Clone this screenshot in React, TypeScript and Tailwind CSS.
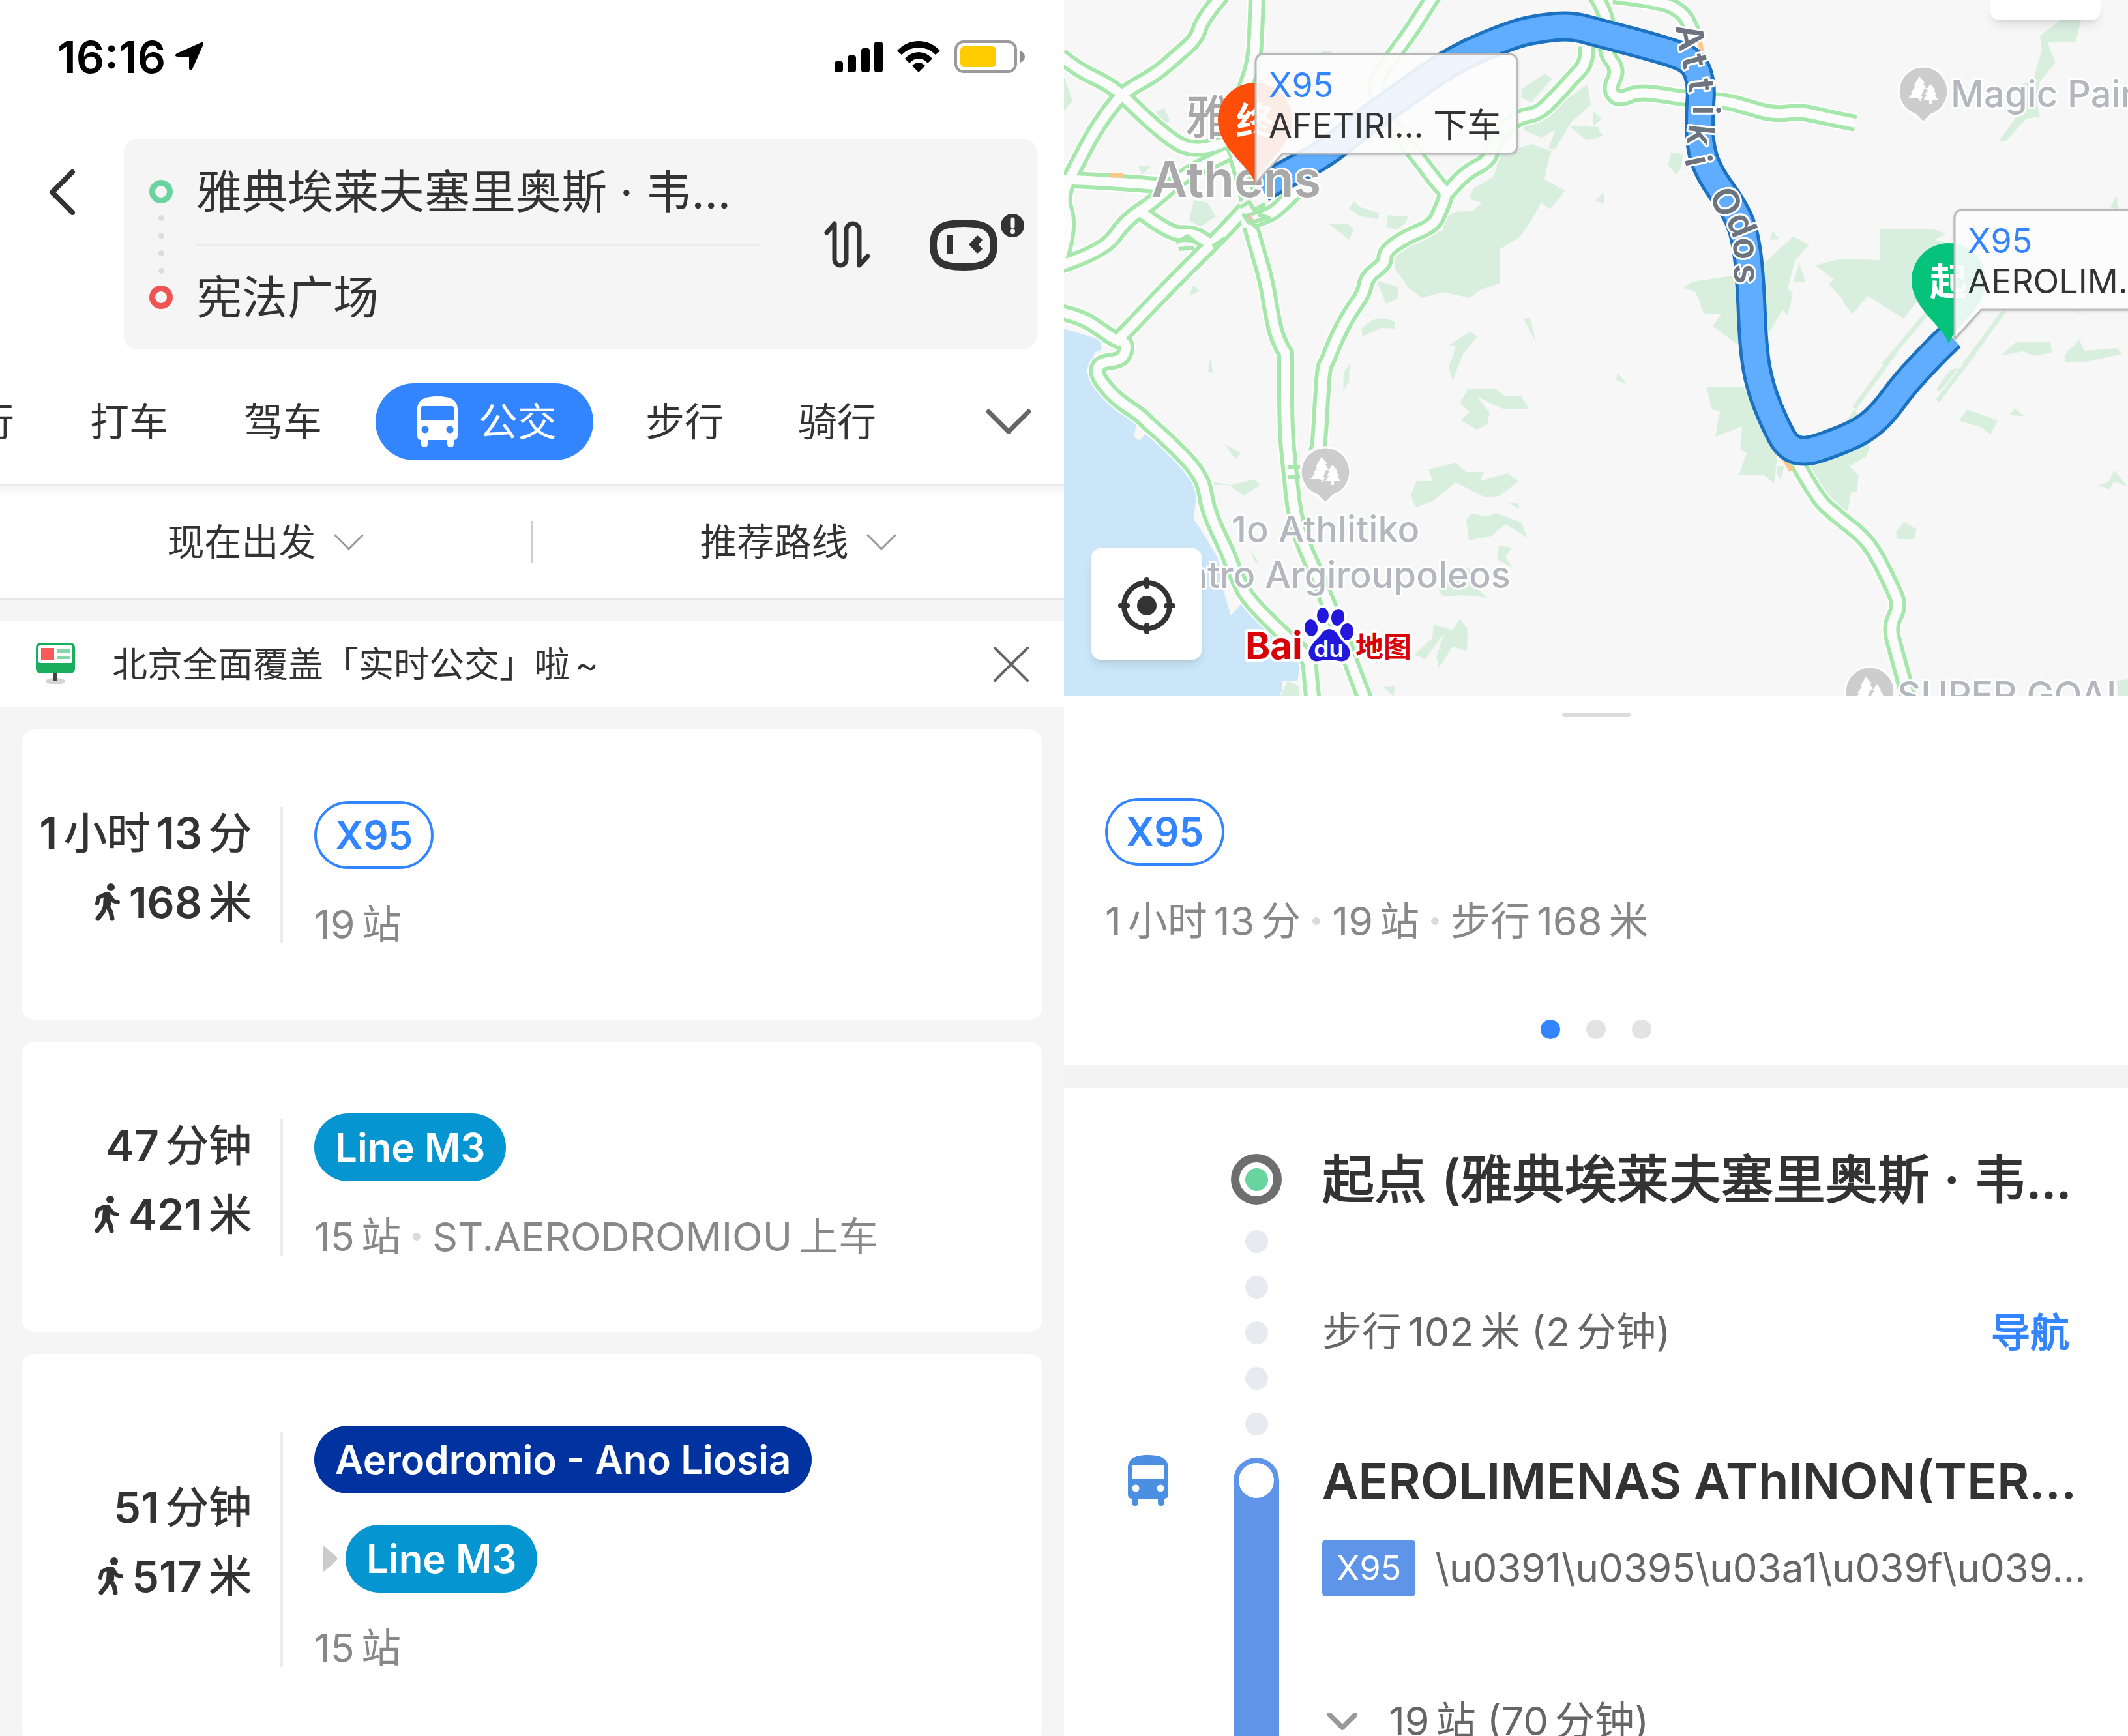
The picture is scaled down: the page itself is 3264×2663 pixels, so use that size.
import React from "react";

type Pt = [number, number];

/* ---------- Geometry helpers for the map ---------- */

const TILE = {
  nw: [0, 0],
  ne: [812, 0],
  sw: [0, 540],
  se: [812, 540],
} as const;

type TileName = keyof typeof TILE;

// Tile units are 1568 x 1568 for an 820 x 560 piece of the map.
function project(tile: TileName, list: string): Pt[] {
  const [ox, oy] = TILE[tile];
  return list
    .trim()
    .split(/\s+/)
    .map((p) => {
      const [x, y] = p.split(",").map(Number);
      return [Math.round(ox + x / 1.912), Math.round(oy + y / 2.8)] as Pt;
    });
}

function smooth(pts: Pt[]): string {
  let d = `M${pts[0][0]} ${pts[0][1]}`;
  for (let i = 1; i < pts.length - 1; i++) {
    const mx = (pts[i][0] + pts[i + 1][0]) / 2;
    const my = (pts[i][1] + pts[i + 1][1]) / 2;
    d += ` Q${pts[i][0]} ${pts[i][1]} ${mx} ${my}`;
  }
  const last = pts[pts.length - 1];
  return d + ` L${last[0]} ${last[1]}`;
}

const polygon = (tile: TileName, list: string) =>
  "M" + project(tile, list).map((p) => p.join(" ")).join("L") + "Z";

const ROADS: string[] = [
  smooth(project("nw", "465,-20 405,80 390,165 330,240 270,320 185,385 150,440 90,560 40,700 -10,840 18,960 -15,1150")),
  smooth(project("nw", "-10,240 40,300 130,360 180,420 240,510 330,620 380,640 440,630 500,590")),
  smooth(project("nw", "566,-20 562,200 550,300 530,380 490,600 520,740 540,860")),
  smooth(project("nw", "-10,770 150,780 290,798")),
  smooth(project("nw", "-10,1140 118,1078 180,945 260,870 350,750 480,660")),
  smooth(project("nw", "225,910 312,1008 380,1000 430,1050")),
  smooth(project("nw", "165,1450 300,1240 440,1040 530,900")),
  smooth(project("nw", "520,960 600,930 640,880 690,810")),
  smooth([
    ...project("nw", "-10,1340 50,1360 110,1420 155,1465 182,1470"),
    ...project("sw", "182,0 165,35 105,45 92,95 150,200 220,265 250,310 290,360 340,430 385,500 412,570 418,650 440,740 480,860 510,980 540,1060 640,1210 718,1310 722,1400 730,1500"),
  ]),
  smooth([
    ...project("nw", "540,930 570,1090 592,1200 612,1370 625,1450 650,1520"),
    ...project("sw", "650,0 650,330 662,500 675,690 700,820 740,950 775,1080 810,1200 845,1350 885,1500"),
  ]),
  smooth([
    ...project("nw", "1085,-20 1025,120 970,230 900,370 960,540 1030,660 1095,790 1125,830 1105,900 1085,970 1000,1020 940,1080 942,1130 888,1190 880,1260 840,1340 800,1450 770,1560"),
    ...project("sw", "762,60 758,150 748,400 740,430"),
  ]),
  smooth([...project("ne", "-20,200 -18,270"), ...project("nw", "1490,340 1440,420 1390,490 1330,500 1260,600 1250,690 1180,740 1125,830")]),
  smooth(project("ne", "5,-20 50,80 30,220 75,300 45,380 70,430 130,395 200,405 280,425 390,435 450,460 530,492 610,480 680,505 768,530")),
  smooth(project("ne", "60,-20 200,5 260,50 285,110 300,180")),
  smooth(project("se", "585,440 650,620 710,700 790,790 830,870 870,990 900,1090 868,1180 890,1290 925,1490")),
];

const ROUTE = smooth([
  [303, 288], [350, 262], [400, 236], [445, 200], [523, 143], [601, 89], [690, 52], [732, 43], [777, 39],
  [812, 48], [940, 82], [968, 98], [978, 132], [975, 171], [975, 221], [988, 264], [1029, 321], [1045, 361], [1053, 429],
  [1057, 536], [1068, 596], [1092, 654], [1110, 686], [1136, 694], [1175, 682], [1225, 661], [1257, 633], [1288, 590], [1335, 540], [1360, 516],
]);

const SEA = [
  polygon("nw", "-5,1410 30,1425 105,1460 110,1500 80,1520 90,1568 -5,1568"),
  polygon("sw", "-5,0 90,0 70,110 130,220 215,300 205,360 220,380 240,350 350,490 390,570 380,720 400,760 450,880 470,1040 490,1130 520,1080 560,1150 620,1210 695,1340 685,1410 638,1410 640,1450 630,1480 -5,1490"),
].join("");

const PARKS = [
  polygon("nw", "1370,620 1430,650 1420,690 1410,770 1470,820 1425,900 1400,870 1365,960 1335,1020 1280,1070 1280,1215 1220,1245 1190,1280 1110,1255 1050,1280 1010,1235 970,1150 965,1090 1010,1040 1060,1000 1110,990 1110,940 1150,910 1200,905 1225,870 1190,855 1200,810 1260,760 1280,660"),
  polygon("nw", "1345,380 1410,315 1430,340 1370,440 1340,420"),
  polygon("nw", "1470,430 1535,360 1545,450 1490,520 1440,640 1420,640 1440,560 1400,590 1350,560 1345,520 1420,470"),
  polygon("nw", "1480,540 1568,545 1568,590 1530,600"),
  polygon("nw", "850,865 870,890 925,915 920,940 870,930 835,895"),
  polygon("nw", "775,960 830,960 850,985 835,1030"),
  polygon("nw", "950,925 1010,930 1000,960 975,985 945,975"),
  polygon("nw", "380,860 420,870 445,930 400,975 367,945"),
  polygon("nw", "270,480 295,465 312,520 290,530"),
  polygon("nw", "0,330 25,430 0,480"),
  polygon("nw", "218,715 255,715 230,750"),
  polygon("nw", "915,1205 980,1235 980,1280 945,1305 930,1250"),
  polygon("nw", "872,1410 905,1375 935,1365 970,1380 970,1410 930,1408 875,1445"),
  polygon("nw", "1130,1480 1190,1425 1213,1445 1170,1520 1140,1635 1128,1580 1150,1490"),
  polygon("nw", "1348,1370 1368,1365 1385,1470"),
  polygon("nw", "378,1225 398,1250 368,1270"),
  polygon("nw", "755,220 785,220 775,240 755,240"),
  polygon("ne", "1370,85 1430,85 1415,180 1330,180 1355,270 1310,350 1300,440 1310,500 1270,510 1210,605 1188,608 1240,500 1270,470 1250,370 1290,340 1315,215 1310,155"),
  polygon("ne", "0,480 25,510 0,540 28,580 0,600"),
  polygon("ne", "225,655 262,660 258,720 245,750 220,710"),
  polygon("ne", "30,830 30,875 3,860"),
  polygon("ne", "525,990 545,1028 518,1030"),
  polygon("ne", "585,1015 632,1050 590,1120 570,1240 585,1260 570,1355 555,1330 520,1420 420,1478 350,1400 375,1350 325,1350 300,1255 262,1235 290,1210 410,1185 480,1160"),
  polygon("ne", "605,1130 622,1210 587,1210"),
  polygon("ne", "840,983 995,983 1035,1005 1000,1030 1100,1060 1100,1250 950,1290 910,1370 805,1270 760,1350 730,1290 775,1230 735,1290 690,1220 705,1200 650,1140 725,1112 840,1118"),
  polygon("ne", "1370,1300 1450,1365 1400,1330"),
  polygon("ne", "1535,840 1538,895 1515,890"),
  polygon("ne", "1200,1520 1240,1468 1340,1468 1345,1515 1290,1530 1260,1510 1200,1525"),
  polygon("ne", "1425,1460 1440,1505 1535,1495 1550,1520 1435,1558 1385,1555 1385,1520"),
  polygon("se", "333,148 440,150 530,330 540,450 530,565 500,528 427,528 450,435 430,420 435,320 358,365 370,255 347,245"),
  polygon("se", "765,245 790,290 810,410 800,450 752,490 778,530 772,600 757,600 745,680 730,690 690,620 620,480 740,300"),
  polygon("se", "1095,245 1185,295 1165,355 1140,325 1072,293"),
  polygon("se", "1235,240 1262,275 1220,272"),
  polygon("se", "1528,508 1568,580 1525,555 1515,590 1480,570 1510,560"),
  polygon("se", "912,730 948,762 940,803 893,803 888,770"),
  polygon("se", "70,90 100,140 66,120"),
  polygon("se", "1045,75 1070,70 1015,170 1005,160"),
  polygon("se", "540,490 560,490 548,548 538,520"),
  polygon("se", "1535,1410 1568,1405 1568,1480 1540,1480"),
  polygon("sw", "430,20 436,90 422,85"),
  polygon("sw", "838,50 835,130 818,165 820,90"),
  polygon("sw", "1185,158 1265,160 1295,190 1340,190 1368,245 1290,245 1210,190 1248,260 1240,310 1210,333 1165,290 1190,255 1160,220"),
  polygon("sw", "1150,475 1180,515 1232,515 1220,555 1300,520 1335,555 1275,620 1235,625 1150,560 1080,640 1030,665 1018,615 1035,553 1080,553 1068,505"),
  polygon("sw", "1305,650 1332,650 1335,675"),
  polygon("sw", "1195,693 1240,705 1265,692 1340,730 1360,797 1295,740 1255,790 1187,808 1180,720"),
  polygon("sw", "1275,832 1313,840 1295,880 1318,930 1270,890"),
  polygon("sw", "1190,925 1200,1000 1240,1055 1170,1045 1110,1050 1095,1010"),
  polygon("sw", "1160,1145 1183,1190 1182,1285 1140,1265 1100,1355 1092,1310 1115,1210 1060,1320 1027,1300 1080,1230 1085,1170 1140,1195"),
  polygon("sw", "470,395 518,435 503,462"),
  polygon("sw", "440,560 490,570 560,545 573,575 525,615 485,572 440,572"),
  polygon("sw", "540,830 570,905 562,905"),
  polygon("sw", "655,1415 690,1435 690,1480 632,1480"),
  polygon("sw", "935,1440 970,1436 968,1478"),
].join("");

const RUNWAYS = [
  smooth(project("ne", "975,1350 850,1568")),
  smooth(project("ne", "1205,1335 1088,1568")),
  smooth(project("se", "885,0 765,240")),
  smooth(project("se", "1118,0 1010,210")),
].join("");

const ROAD_LETTERS: [string, number, number, number][] = [
  ["A", 959, 57, 80],
  ["t", 966, 94, 76],
  ["t", 976, 131, 84],
  ["i", 983, 169, 90],
  ["k", 975, 207, 96],
  ["i", 971, 247, 78],
  ["O", 1014, 310, 66],
  ["d", 1038, 345, 68],
  ["o", 1045, 381, 84],
  ["s", 1046, 420, 88],
];

/* ---------- Icons ---------- */

function BusIcon({ className }: { className?: string }) {
  return (
    <svg viewBox="0 0 62 78" className={className} fill="currentColor" aria-hidden="true">
      <path
        fillRule="evenodd"
        d="M0 20C0 6 10 0 31 0s31 6 31 20v40q0 7-6 7v6q0 5-5 5t-5-5v-6H16v6q0 5-5 5t-5-5v-6q-6 0-6-7zM6 18q0-3 3-3h44q3 0 3 3v18H6zM12 45.500a5.500 5.500 0 1 0 .01 0zM50 45.500a5.500 5.500 0 1 0 .01 0z"
      />
    </svg>
  );
}

function WalkIcon() {
  return (
    <svg viewBox="0 0 38 58" className="h-[58px] w-[38px] shrink-0" fill="none" stroke="currentColor" strokeLinecap="round" strokeLinejoin="round" aria-hidden="true">
      <circle cx="24" cy="6" r="6" fill="currentColor" stroke="none" />
      <path d="M19 20L18 33" strokeWidth="12" />
      <path d="M3 31L5 22L15 17H21L28 27L35 29" strokeWidth="6" />
      <path d="M16 34L12 44L4 54M18 34L24 44L26 54" strokeWidth="7" />
    </svg>
  );
}

function Chevron({ className, width }: { className: string; width: number }) {
  return (
    <svg viewBox="0 0 48 28" className={className} fill="none" stroke="currentColor" strokeWidth={width} strokeLinecap="round" strokeLinejoin="round" aria-hidden="true">
      <path d="M3 3L24 24L45 3" />
    </svg>
  );
}

function StatusIcons() {
  return (
    <div className="flex items-center">
      <svg viewBox="0 0 74 48" className="h-12 w-[74px]" aria-label="信号">
        <rect x="0" y="31" width="13" height="17" rx="4" />
        <rect x="20" y="22" width="13" height="26" rx="4" />
        <rect x="41" y="11" width="13" height="37" rx="4" />
        <rect x="61" y="1" width="13" height="47" rx="4" />
      </svg>
      <svg viewBox="0 0 66 48" className="ml-[22px] h-12 w-[66px]" aria-label="无线网络">
        <path d="M0 15Q14 0 33 0T66 15L59 21Q48 10 33 10T7 21Z" />
        <path d="M12 27Q21 17 33 17T54 27L47 34Q41 27 33 27T19 34Z" />
        <path d="M23 38Q28 33 33 33T43 38L33 48Z" />
      </svg>
      <svg viewBox="0 0 108 50" className="ml-[22px] h-[50px] w-[108px]" aria-label="电池">
        <rect x="2" y="2" width="92" height="46" rx="12" fill="none" stroke="#9b9b9d" strokeWidth="4" />
        <rect x="9" y="9" width="55" height="32" rx="6" fill="#ffcc00" />
        <path d="M101 16q7 3 7 9t-7 9z" fill="#8e8e90" />
      </svg>
    </div>
  );
}

function TreePin({ x, y }: { x: number; y: number }) {
  return (
    <g transform={`translate(${x} ${y})`}>
      <path d="M0 -38a38 38 0 0 1 12 74L0 48L-12 36A38 38 0 0 1 0 -38z" fill="#cdcdcd" stroke="#fff" strokeWidth="3" strokeLinejoin="round" />
      <path d="M-6 -23L3 -12H0L5 -3H1L-3 7L0 11H-4V16L-8 11H-23L-16 2H-19L-12 -8H-15z" fill="#fff" />
      <path d="M11 -11L18 -2H16L21 6H18L23 14H13V20H9V14H0L5 6H2L7 -2H4z" fill="#fff" />
    </g>
  );
}

/* ---------- Text with mixed digits and Chinese ---------- */

function Mixed({ parts }: { parts: string[] }) {
  return (
    <>
      {parts.map((part, i) => (
        <span key={i}>{part}</span>
      ))}
    </>
  );
}

function StrongMixed({ parts }: { parts: string[] }) {
  return (
    <>
      {parts.map((part, i) => (
        <span key={i} className={/\d/.test(part) ? "font-semibold" : "font-normal [-webkit-text-stroke:1px]"}>
          {part}
        </span>
      ))}
    </>
  );
}

function Dot() {
  return (
    <span className="mx-2 flex">
      <span className="size-3 rounded-full bg-[#dadada]" />
    </span>
  );
}

const infoLine = "mt-[43px] flex items-center gap-[10px] whitespace-nowrap text-[61px] leading-[84px] text-[#888]";
const pill = "flex h-[104px] items-center whitespace-nowrap rounded-full text-[60px] font-semibold";

function RoutePill({ children }: { children: React.ReactNode }) {
  return <span className={`${pill} w-fit border-4 border-[#3385ff] bg-white px-7 text-[#3385ff]`}>{children}</span>;
}

/* ---------- Route planner ---------- */

function SearchHeader() {
  return (
    <div className="mt-[39px] flex items-start pr-[42px]">
      <button type="button" aria-label="返回" className="flex h-[164px] w-[190px] shrink-0 items-center pl-[74px] text-[#333]">
        <svg viewBox="0 0 42 70" className="h-[70px] w-[42px]" fill="none" stroke="currentColor" strokeWidth="8" strokeLinecap="round" strokeLinejoin="round">
          <path d="M37 4L6 35L37 66" />
        </svg>
      </button>
      <div className="flex min-w-0 flex-1 items-start rounded-[20px] bg-[#f5f5f5] pl-[39px]">
        <div className="flex shrink-0 flex-col items-center gap-[18px] pt-[63px]">
          <span className="size-9 rounded-full border-[9px] border-[#6ad4a0]" />
          <span className="size-[9px] rounded-full bg-[#dcdcdc]" />
          <span className="size-[9px] rounded-full bg-[#dcdcdc]" />
          <span className="size-[9px] rounded-full bg-[#dcdcdc]" />
          <span className="size-[9px] rounded-full bg-[#dcdcdc]" />
          <span className="size-9 rounded-full border-[9px] border-[#f05353]" />
        </div>
        <div className="ml-9 min-w-0 flex-1 text-[70px] text-[#333]">
          <button type="button" className="block h-[162px] w-full whitespace-nowrap text-left">雅典埃莱夫塞里奥斯 · 韦…</button>
          <hr className="h-[2px] border-0 bg-[#ededed]" />
          <button type="button" className="block h-[159px] w-full whitespace-nowrap text-left">宪法广场</button>
        </div>
        <button type="button" aria-label="交换起终点" className="ml-[98px] mt-[126px] shrink-0">
          <svg viewBox="0 0 72 72" className="size-[72px]" fill="none" stroke="#333" strokeWidth="7" strokeLinecap="round" strokeLinejoin="round">
            <path d="M4 18L16 4V59a9 9 0 0 0 18 0V14a10 10 0 0 1 20 0V68L67 54" />
          </svg>
        </button>
        <button type="button" aria-label="语音助手" className="ml-[88px] mr-[18px] mt-[114px] shrink-0">
          <svg viewBox="0 0 148 90" className="h-[90px] w-[148px]">
            <path d="M54 15.500C89 15.500 100.500 24 100.500 49S89 82.500 54 82.500S7.500 74 7.500 49S19 15.500 54 15.500Z" fill="none" stroke="#333" strokeWidth="11" />
            <rect x="28" y="34" width="10" height="28" fill="#333" />
            <path d="M62 48L75 34L83 41L77 48L83 55L75 62Z" fill="#333" />
            <circle cx="129" cy="19" r="18" fill="#333" />
            <path d="M129 10V20" stroke="#f5f5f5" strokeWidth="7" strokeLinecap="round" />
            <circle cx="129" cy="28" r="4" fill="#f5f5f5" />
          </svg>
        </button>
      </div>
    </div>
  );
}

function Tabs() {
  return (
    <div className="mt-[52px] flex items-center pb-[37px] text-[60px] leading-[118px] text-[#333]">
      <nav className="flex min-w-0 flex-1 gap-12 overflow-hidden whitespace-nowrap">
        <button type="button" className="-ml-[72px] px-[34px]">行</button>
        <button type="button" className="px-[34px]">打车</button>
        <button type="button" className="px-[34px]">驾车</button>
        <button type="button" aria-current="page" className="flex shrink-0 items-center rounded-full bg-[#3385ff] pl-16 pr-14 text-white">
          <BusIcon className="mr-8 h-[78px] w-[62px]" />
          公交
        </button>
        <button type="button" className="pl-8 pr-[34px]">步行</button>
        <button type="button" className="pl-8 pr-[34px]">骑行</button>
      </nav>
      <button type="button" aria-label="更多" className="mr-[50px] shrink-0 text-[#666]">
        <Chevron className="h-[41px] w-[70px]" width={5} />
      </button>
    </div>
  );
}

function Filters() {
  const item = "flex flex-1 items-center justify-center gap-[26px]";
  return (
    <div className="flex h-[175px] items-center border-b-2 border-[#e8e8ea] bg-gradient-to-b from-[#f3f3f3] to-white to-[9%] text-[57px] text-[#333]">
      <button type="button" className={item}>
        现在出发
        <Chevron className="h-[28px] w-[48px] text-[#999]" width={3} />
      </button>
      <span className="h-[65px] w-[2px] bg-[#ccc]" />
      <button type="button" className={item}>
        推荐路线
        <Chevron className="h-[28px] w-[48px] text-[#999]" width={3} />
      </button>
    </div>
  );
}

function Notice() {
  return (
    <div className="mt-[33px] flex h-[132px] items-center bg-white pl-[54px] pr-[53px]">
      <svg viewBox="0 0 62 66" className="h-[66px] w-[62px] shrink-0" aria-hidden="true">
        <ellipse cx="31" cy="59" rx="15" ry="5" fill="#d5d5d5" />
        <rect x="1" y="0" width="60" height="47" rx="7" fill="#18ae5e" />
        <rect x="5" y="4" width="52" height="27" rx="3" fill="#fff" />
        <rect x="9" y="8" width="20" height="18" fill="#fb5a5a" />
        <path d="M34 12.500H53M34 22.500H53" stroke="#85d5a6" strokeWidth="5" />
        <path d="M31 47V59" stroke="#444" strokeWidth="6" />
      </svg>
      <p className="ml-14 flex flex-1 gap-2 text-[54px] text-[#333]">
        <span>北京全面覆盖「实时公交」啦</span>
        <span>~</span>
      </p>
      <button type="button" aria-label="关闭" className="text-[#666]">
        <svg viewBox="0 0 56 56" className="size-14" fill="none" stroke="currentColor" strokeWidth="4" strokeLinecap="round">
          <path d="M3 3L53 53M53 3L3 53" />
        </svg>
      </button>
    </div>
  );
}

function RouteCard({ time, walk, lines, info }: { time: string[]; walk: string; lines: React.ReactNode; info: React.ReactNode }) {
  return (
    <li>
      <a href="#route" className="flex rounded-[20px] bg-white pr-8">
        <div className="flex w-[353px] shrink-0 flex-col items-end justify-center pb-[118px] pt-24 text-[66px] leading-[106px] text-[#333]">
          <span className="flex gap-[10px] whitespace-nowrap">
            <StrongMixed parts={time} />
          </span>
          <span className="flex items-center gap-[10px] whitespace-nowrap">
            <span className="mr-1">
              <WalkIcon />
            </span>
            <StrongMixed parts={[walk, "米"]} />
          </span>
        </div>
        <span className="mb-[117px] ml-11 mt-[119px] w-1 shrink-0 bg-[#ececec]" />
        <div className="ml-12 min-w-0 flex-1 pb-[104px] pt-[110px]">
          <div className="flex flex-col gap-12">{lines}</div>
          <p className={infoLine}>{info}</p>
        </div>
      </a>
    </li>
  );
}

function Planner() {
  return (
    <section className="flex min-w-0 flex-col bg-[#f5f5f5]">
      <header className="border-b-2 border-[#ebebed] bg-white">
        <div className="flex h-[174px] items-center justify-between pl-[88px] pr-[60px]">
          <div className="flex items-center text-[68px] font-semibold text-black">
            16:16
            <svg viewBox="0 0 44 44" className="ml-[14px] size-11" aria-hidden="true">
              <path d="M44 3L27 41Q23 45 22 40V22H4Q-2 21 3 17L41 0Q45 -1 44 3Z" />
            </svg>
          </div>
          <StatusIcons />
        </div>
        <SearchHeader />
        <Tabs />
      </header>
      <Filters />
      <Notice />
      <ul className="flex flex-col gap-[34px] px-[33px] pt-[34px]">
        <RouteCard
          time={["1", "小时", "13", "分"]}
          walk="168"
          lines={<RoutePill>X95</RoutePill>}
          info={<Mixed parts={["19", "站"]} />}
        />
        <RouteCard
          time={["47", "分钟"]}
          walk="421"
          lines={<span className={`${pill} w-fit bg-[#0595d1] px-8 text-white`}>Line M3</span>}
          info={
            <>
              <Mixed parts={["15", "站"]} />
              <Dot />
              <Mixed parts={["ST.AERODROMIOU"]} />
              <Mixed parts={["上车"]} />
            </>
          }
        />
        <RouteCard
          time={["51", "分钟"]}
          walk="517"
          lines={
            <>
              <span className={`${pill} w-fit bg-[#0033a0] px-8 text-white`}>Aerodromio - Ano Liosia</span>
              <div className="flex items-center">
                <svg viewBox="0 0 22 40" className="ml-[14px] mr-3 h-10 w-[22px]" fill="#cbcbcb" aria-hidden="true">
                  <path d="M0 0Q18 14 22 20Q18 26 0 40Z" />
                </svg>
                <span className={`${pill} bg-[#0595d1] px-8 text-white`}>Line M3</span>
              </div>
            </>
          }
          info={<Mixed parts={["15", "站"]} />}
        />
      </ul>
    </section>
  );
}

/* ---------- Map and route details ---------- */

function Callout({ place, children }: { place: string; children: React.ReactNode }) {
  return (
    <div className={`absolute h-[200px] w-[404px] ${place}`}>
      <svg viewBox="0 0 404 200" className="absolute inset-0 size-full overflow-visible drop-shadow-sm" aria-hidden="true">
        <path d="M1 14Q1 1 14 1H389Q402 1 402 14V140Q402 154 389 154H42L1 199Z" fill="#fff" fillOpacity="0.9" stroke="#b9b9b9" strokeWidth="3" />
      </svg>
      <div className="relative whitespace-nowrap pl-[21px] pt-[18px] text-[52px] leading-[62px]">
        <p className="text-[#3385ff]">X95</p>
        <p className="text-[#333]">{children}</p>
      </div>
    </div>
  );
}

function MapPin({ x, y, fill, label }: { x: number; y: number; fill: string; label: string }) {
  return (
    <g transform={`translate(${x} ${y})`}>
      <path d="M0 154C-6 128 -57 100 -57 56A57 57 0 0 1 57 56C57 100 6 128 0 154Z" fill={fill} />
      <text y="79" textAnchor="middle" fontSize="58" fontWeight="700" fill="#fff">
        {label}
      </text>
    </g>
  );
}

function BaiduLogo() {
  return (
    <svg viewBox="0 0 260 92" className="absolute left-[276px] top-[928px] h-[92px] w-[260px]" aria-label="Baidu 地图">
      <g stroke="#fff" strokeWidth="8" strokeLinejoin="round" paintOrder="stroke">
        <g fill="#d90008" fontWeight="700">
          <text x="2" y="83" fontSize="58">Bai</text>
          <text x="171" y="80" fontSize="43">地图</text>
        </g>
        <g fill="#2218dc">
          <ellipse cx="103" cy="35" rx="10" ry="13" transform="rotate(-8 103 35)" />
          <ellipse cx="121" cy="16" rx="9" ry="12" />
          <ellipse cx="144" cy="19" rx="10" ry="13" transform="rotate(10 144 19)" />
          <ellipse cx="158" cy="41" rx="10" ry="13" transform="rotate(6 158 41)" />
          <path d="M131 37Q139 37 145 47T159 63Q165 72 161 80T146 86Q138 84 131 84T115 86Q105 88 101 80T103 63T117 47Q123 37 131 37Z" />
        </g>
      </g>
      <text x="130" y="80" textAnchor="middle" fontSize="37" fontWeight="600" fill="#fff">du</text>
    </svg>
  );
}

function RouteMap() {
  return (
    <div className="relative h-[1068px] shrink-0 overflow-hidden bg-[#f6f7f6]">
      <svg viewBox="0 0 1632 1068" preserveAspectRatio="xMinYMin slice" className="absolute inset-0 size-full" role="img" aria-label="路线地图">
        <path d={PARKS} fill="#d9efde" />
        <path d={SEA} fill="#cbe6f9" />
        <path d={RUNWAYS} fill="none" stroke="#d9efde" strokeWidth="7" />
        <g fill="none" strokeLinejoin="round">
          <g stroke="#fff" strokeWidth="30">
            {ROADS.map((d) => (
              <path key={d} d={d} />
            ))}
          </g>
          <g stroke="#a6e7ab" strokeWidth="26">
            {ROADS.map((d) => (
              <path key={d} d={d} />
            ))}
          </g>
          <g stroke="#fbfcfb" strokeWidth="14">
            {ROADS.map((d) => (
              <path key={d} d={d} />
            ))}
          </g>
          <path d="M270 318L284 310L292 322L306 314L300 330L314 334L284 342L276 330L296 350M344 716H362M344 732H362M172 372L190 362L204 374M176 382L200 380M228 378L246 366" stroke="#a6e7ab" strokeWidth="6" />
          <path d="M70 269H91M1102 700L1116 722M975 60L978 78" stroke="#fdc98a" strokeWidth="7" />
          <path d="M284 330L288 338" stroke="#f7bdb0" strokeWidth="6" />
          <path d={ROUTE} stroke="#1b72c0" strokeWidth="46" />
          <path d={ROUTE} stroke="#60adff" strokeWidth="36" />
        </g>
        <TreePin x={401} y={724} />
        <TreePin x={1318} y={140} />
        <TreePin x={1236} y={1061} />
        <g stroke="#fff" strokeWidth="6" strokeLinejoin="round" paintOrder="stroke">
          <g fill="#a9a9a9" fontWeight="600">
            <text x="186" y="206" fontSize="72" fontWeight="500">雅</text>
            <text x="134" y="302" fontSize="76">Athens</text>
          </g>
          <g fill="#b4b8be" fontSize="56" fontWeight="500">
            <text x="401" y="832" textAnchor="middle">1o Athlitiko</text>
            <text x="685" y="902" textAnchor="end">ntro Argiroupoleos</text>
            <text x="1360" y="164">Magic Pain</text>
            <text x="1278" y="1086">SUPER GOAL</text>
          </g>
          <g fill="#6c7480" fontSize="56" fontWeight="600" textAnchor="middle">
            {ROAD_LETTERS.map(([ch, x, y, a], i) => (
              <text key={i} transform={`translate(${x} ${y}) rotate(${a})`} y="18">
                {ch}
              </text>
            ))}
          </g>
        </g>
        <MapPin x={293} y={128} fill="#ff4d0a" label="终" />
        <MapPin x={1357} y={374} fill="#06c37b" label="起" />
      </svg>
      <Callout place="left-[293px] top-[82px]">AFETIRI… 下车</Callout>
      <Callout place="left-[1365px] top-[321px]">AEROLIM…</Callout>
      <div className="absolute right-[42px] top-0 h-[31px] w-[169px] rounded-b-[14px] bg-white shadow-lg" />
      <button type="button" aria-label="定位" className="absolute left-[42px] top-[841px] flex h-[171px] w-[169px] items-center justify-center rounded-[14px] bg-white shadow-lg">
        <svg viewBox="0 0 88 88" className="mt-1 size-[88px]" fill="none" stroke="#333" aria-hidden="true">
          <circle cx="44" cy="44" r="35" strokeWidth="8" />
          <circle cx="44" cy="44" r="15" fill="#333" stroke="none" />
          <path d="M44 4V14M44 74V84M4 44H14M74 44H84" strokeWidth="8" strokeLinecap="round" />
        </svg>
      </button>
      <BaiduLogo />
    </div>
  );
}

function Details() {
  const row = "grid grid-cols-[256px_78px_1fr]";
  return (
    <section className="flex min-w-0 flex-col bg-white">
      <RouteMap />
      <div className="flex flex-col items-center pb-10 pt-[25px]">
        <span className="h-[7px] w-[105px] rounded-sm bg-[#dcdcdc]" />
        <div className="mt-[124px] w-full px-[63px]">
          <RoutePill>X95</RoutePill>
          <p className={infoLine}>
            <Mixed parts={["1", "小时", "13", "分"]} />
            <Dot />
            <Mixed parts={["19", "站"]} />
            <Dot />
            <Mixed parts={["步行", "168", "米"]} />
          </p>
        </div>
        <div className="mt-[109px] flex gap-10">
          <span className="size-[30px] rounded-full bg-[#3385ff]" />
          <span className="size-[30px] rounded-full bg-[#e3e3e3]" />
          <span className="size-[30px] rounded-full bg-[#e3e3e3]" />
        </div>
      </div>
      <div className="h-[35px] shrink-0 bg-[#f4f4f4]" />
      <ol className="flex flex-1 flex-col pt-[84px]">
        <li className={row}>
          <span />
          <span className="flex size-[78px] items-center justify-center self-center rounded-full border-[13px] border-[#6e6e6e]">
            <span className="size-[35px] rounded-full bg-[#6ad4a0]" />
          </span>
          <h2 className="whitespace-nowrap pl-[62px] text-[80px] font-normal leading-[112px] text-[#333] [-webkit-text-stroke:2px]">起点 (雅典埃莱夫塞里奥斯 · 韦…</h2>
        </li>
        <li className={`${row} h-[358px]`}>
          <span />
          <span className="flex flex-col items-center justify-center gap-[35px]">
            {[0, 1, 2, 3, 4].map((i) => (
              <span key={i} className="size-[35px] rounded-full bg-[#e7ebef]" />
            ))}
          </span>
          <div className="flex items-center justify-between whitespace-nowrap pl-[62px] pr-[90px] text-[61px]">
            <p className="flex gap-[10px] text-[#666]">
              <Mixed parts={["步行", "102", "米 (2", "分钟)"]} />
            </p>
            <a href="#navigate" className="text-[60px] text-[#3385ff] [-webkit-text-stroke:2px]">导航</a>
          </div>
        </li>
        <li className={`${row} flex-1`}>
          <BusIcon className="ml-[98px] mt-[9px] h-[78px] w-[62px] text-[#4a8fe2]" />
          <span className="mx-1 mt-[13px] rounded-t-full bg-[#5e95e8] pt-2">
            <span className="mx-auto block size-[54px] rounded-full bg-white" />
          </span>
          <div className="min-w-0 whitespace-nowrap pl-[62px]">
            <h2 className="text-[76px] font-semibold leading-[96px] text-[#333]">AEROLIMENAS AThINON(TER…</h2>
            <p className="mt-[43px] flex items-center text-[60px] leading-[87px] text-[#666]">
              <span className="mr-[30px] rounded-md bg-[#5e95e8] px-[22px] text-[52px] text-white">X95</span>
              {"\\u0391\\u0395\\u03a1\\u039f\\u039…"}
            </p>
            <button type="button" className="mt-[149px] flex items-center gap-[10px] text-[61px] leading-[84px] text-[#666]">
              <Chevron className="ml-2 mr-[38px] h-[27px] w-[46px] text-[#999]" width={8} />
              <Mixed parts={["19", "站 (70", "分钟)"]} />
            </button>
          </div>
        </li>
      </ol>
    </section>
  );
}

export default function App() {
  return (
    <main className="grid h-screen grid-cols-2 overflow-hidden font-[Inter,'Noto_Sans_CJK_SC',sans-serif]">
      <Planner />
      <Details />
    </main>
  );
}
